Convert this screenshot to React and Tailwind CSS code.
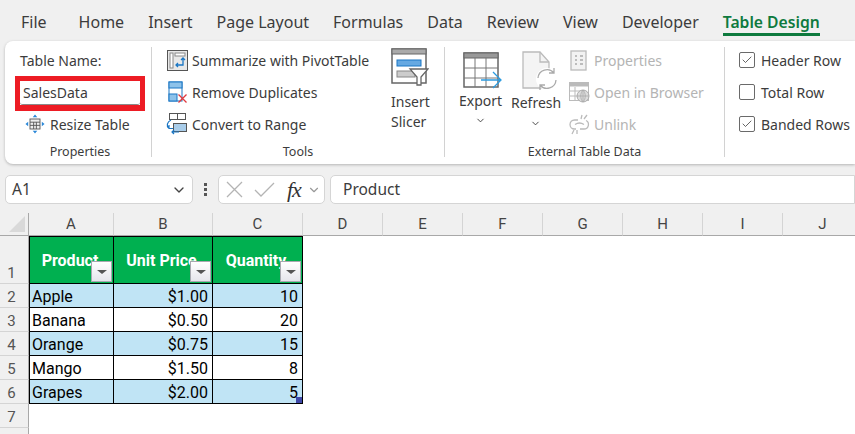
import React from 'react';
import { Check, ChevronDown } from 'lucide-react';

const UI_FONT = 'font-["Noto_Sans",sans-serif]';
const CELL_FONT = 'font-["Roboto",sans-serif]';

const TABS = ['Home', 'Insert', 'Page Layout', 'Formulas', 'Data', 'Review', 'View', 'Developer'];
const COLUMNS = ['A', 'B', 'C', 'D', 'E', 'F', 'G', 'H', 'I', 'J'];
const ROWS = [
  { name: 'Apple', price: '$1.00', qty: '10' },
  { name: 'Banana', price: '$0.50', qty: '20' },
  { name: 'Orange', price: '$0.75', qty: '15' },
  { name: 'Mango', price: '$1.50', qty: '8' },
  { name: 'Grapes', price: '$2.00', qty: '5' },
];

const ResizeIcon = () => (
  <svg width="20" height="20" viewBox="0 0 22 22" fill="none">
    <rect x="5.500" y="5.500" width="11" height="11" fill="#eee" stroke="#555" />
    <path d="M5.500 9h11M9.500 9v7.500M12.500 9v7.500M5.500 12.500h11" stroke="#555" />
    <path d="M11 0.500l2.500 3h-5zM11 21.500l2.500-3h-5zM0.500 11l3-2.500v5zM21.500 11l-3-2.500v5z" fill="#2b88d8" />
  </svg>
);

const PivotIcon = () => (
  <svg width="21" height="21" viewBox="0 0 21 21" fill="none">
    <rect x="0.500" y="0.500" width="20" height="20" fill="#e8e8e8" stroke="#555" />
    <rect x="3" y="3" width="3" height="15" fill="#fff" stroke="#888" />
    <rect x="8" y="3" width="10" height="3" fill="#fff" stroke="#888" />
    <path d="M16 8.500v6.500H9.500M14 10l2-2 2 2M11 13l-2 2 2 2" stroke="#1a76c4" strokeWidth="1.300" />
  </svg>
);

const DuplicatesIcon = () => (
  <svg width="22" height="22" viewBox="0 0 22 22" fill="none">
    <rect x="3" y="1" width="13" height="19" fill="#fff" stroke="#1a76c4" />
    <rect x="3" y="1" width="13" height="6" fill="#8dc2ea" stroke="#1a76c4" />
    <rect x="3" y="13" width="8" height="7" fill="#8dc2ea" stroke="#1a76c4" />
    <path d="M12.500 13.500l8 8M20.500 13.500l-8 8" stroke="#e0393e" strokeWidth="1.300" />
  </svg>
);

const ConvertIcon = () => (
  <svg width="22" height="22" viewBox="0 0 22 22" fill="none">
    <rect x="3.500" y="0.500" width="8" height="6" fill="#fff" stroke="#555" />
    <rect x="11.500" y="0.500" width="8" height="6" fill="#fff" stroke="#555" />
    <rect x="7.500" y="10.500" width="13" height="8" fill="#a9cdea" stroke="#555" />
    <path d="M5 7C1 9 0 13 3 15.500M3 15.500V12M3 15.500H7M6 19h7M8 17l-2 2 2 2" stroke="#1a76c4" strokeWidth="1.200" />
  </svg>
);

const SlicerIcon = () => (
  <svg width="38" height="38" viewBox="0 0 38 38" fill="none">
    <rect x="1" y="1" width="34" height="34" fill="#fff" stroke="#666" strokeWidth="1.500" />
    <rect x="1" y="1" width="34" height="5" fill="#aaa" stroke="#666" />
    <rect x="6" y="12" width="24" height="6" fill="#66a9e2" stroke="#1a76c4" />
    <rect x="6" y="23" width="18" height="6" fill="#ccc" stroke="#888" />
    <path d="M19 21h18l-7 8v8h-4v-8z" fill="#fff" stroke="#666" strokeWidth="1.300" />
  </svg>
);

const ExportIcon = () => (
  <svg width="39" height="37" viewBox="0 0 39 37" fill="none">
    <rect x="1" y="1" width="34" height="34" fill="#fff" stroke="#666" strokeWidth="1.500" />
    <rect x="1" y="1" width="34" height="5" fill="#999" stroke="#666" />
    <path d="M1 16h34M1 26h34M12 6v29M23 6v29" stroke="#777" />
    <path d="M18 31h19M30 23l8 8-8 8" stroke="#2b9be0" strokeWidth="1.300" transform="translate(0 -3)" />
  </svg>
);

const RefreshIcon = () => (
  <svg width="36" height="39" viewBox="0 0 36 39" fill="none">
    <path d="M1 1h17l9 10v26H1z" fill="#f4f4f4" stroke="#bbb" strokeWidth="1.300" />
    <path d="M18 1v10h9" stroke="#bbb" strokeWidth="1.300" />
    <circle cx="25" cy="28" r="11" fill="#fff" />
    <path d="M16 27a9 9 0 0 1 16-5M34 29a9 9 0 0 1-16 5M32 17v5h-5M18 39v-5h5" stroke="#aaa" strokeWidth="1.300" />
  </svg>
);

const PropertiesIcon = () => (
  <svg width="18" height="21" viewBox="0 0 18 21" fill="none">
    <rect x="1" y="1" width="15" height="19" fill="#f2f2f2" stroke="#bbb" strokeWidth="1.300" />
    <path d="M5 6h2M10 6h3M5 10h2M10 10h3M5 14h2M10 14h3" stroke="#aaa" strokeWidth="1.500" />
  </svg>
);

const BrowserIcon = () => (
  <svg width="21" height="21" viewBox="0 0 21 21" fill="none">
    <rect x="0.500" y="0.500" width="19" height="18" fill="#fff" stroke="#bbb" />
    <rect x="0.500" y="0.500" width="19" height="4" fill="#bbb" />
    <path d="M0.500 9h12M0.500 14h8M6 5v14" stroke="#bbb" />
    <circle cx="14" cy="14" r="6" fill="#ddd" stroke="#aaa" />
    <path d="M8 14h12M14 8v12M14 8c-3 3-3 9 0 12M14 8c3 3 3 9 0 12" stroke="#aaa" strokeWidth="0.800" />
  </svg>
);

const UnlinkIcon = () => (
  <svg width="21" height="21" viewBox="0 0 21 21" fill="none">
    <path d="M9 6H5.500a4.500 4.500 0 0 0 0 9H7M11 15h4a4.500 4.500 0 0 0 2-8.500" stroke="#bbb" strokeWidth="1.300" />
    <path d="M6 10.500c3-2 6-2 9 0M13 1l-1 4M18 1l-3 4M3 20l2-4M8 20v-4" stroke="#bbb" strokeWidth="1.300" />
  </svg>
);

const RibbonRow = ({ icon, label, muted }) => (
  <div className={`h-8 flex items-center gap-[4px] whitespace-nowrap ${muted ? 'text-[#b4b4b4]' : 'text-[#3c3c3c]'}`}>
    <div className="w-[22px] flex justify-center">{icon}</div>
    <span>{label}</span>
  </div>
);

const OptionRow = ({ label, checked }) => (
  <div className="h-8 flex items-center gap-[6px] whitespace-nowrap text-[#3c3c3c]">
    <div className="w-4 h-4 rounded-[2px] border border-[#6a6a6a] bg-white flex items-center justify-center">
      {checked && <Check size={12} strokeWidth={1.500} color="#333" />}
    </div>
    <span>{label}</span>
  </div>
);

const Group = ({ width, label, labelClass = '', className = '', children }) => (
  <div className={`flex flex-col shrink-0 h-[110px] border-r border-[#d2d2d2] ${width}`}>
    <div className={`flex-1 ${className}`}>{children}</div>
    <div className={`text-center text-[12.500px] text-[#3c3c3c] leading-[18px] h-[14px] ${labelClass}`}>{label}</div>
  </div>
);

const Ribbon = () => (
  <div className="ml-[5px] h-[123px] bg-white rounded-l-[8px] shadow-[0_1px_3px_rgba(0,0,0,0.25)] pt-[6px] flex text-[14px] overflow-hidden">
    <Group width="w-[147px]" label="Properties" labelClass="pl-[4px]" className="pl-[15px] -mt-[3px]">
      <div className="h-8 flex items-center text-[#3c3c3c]">Table Name:</div>
      <div className="-ml-[5px] -mb-[3px] w-[130px] h-[35px] border-[5px] border-b-[6px] border-[#ed1c24] bg-white">
        <div className="h-full rounded-b-[3px] border-b border-[#8a8a8a] pl-[3px] leading-[23px] text-[#3c3c3c]">SalesData</div>
      </div>
      <div className="h-8 flex items-center gap-[5px] pl-[5px] text-[#3c3c3c]">
        <ResizeIcon />
        <span>Resize Table</span>
      </div>
    </Group>
    <Group width="w-[293px]" label="Tools" className="flex -mt-[3px]">
      <div className="pl-[14px] w-[235px]">
        <RibbonRow icon={<PivotIcon />} label="Summarize with PivotTable" />
        <RibbonRow icon={<DuplicatesIcon />} label="Remove Duplicates" />
        <RibbonRow icon={<ConvertIcon />} label="Convert to Range" />
      </div>
      <div className="pl-[4px] pt-[4px] leading-5 text-[#3c3c3c]">
        <SlicerIcon />
        <div className="mt-[6px]">Insert</div>
        <div>Slicer</div>
      </div>
    </Group>
    <Group width="w-[280px]" label="External Table Data" className="flex -mt-[3px]">
      <div className="w-[63px] pl-[18px] pt-[8px] text-[#3c3c3c]">
        <ExportIcon />
        <div className="mt-[2px] -ml-[4px] leading-5">Export</div>
        <ChevronDown size={11} className="ml-[12px] mt-[4px]" />
      </div>
      <div className="w-[62px] pl-[14px] pt-[7px] text-[#3c3c3c]">
        <RefreshIcon />
        <div className="-ml-[11px] leading-5 mt-[3px]">Refresh</div>
        <ChevronDown size={11} className="ml-[8px] mt-[5px]" />
      </div>
      <div className="-ml-[2px]">
        <RibbonRow muted icon={<PropertiesIcon />} label="Properties" />
        <RibbonRow muted icon={<BrowserIcon />} label="Open in Browser" />
        <RibbonRow muted icon={<UnlinkIcon />} label="Unlink" />
      </div>
    </Group>
    <div className="pl-[14px] -mt-[3px]">
      <OptionRow checked label="Header Row" />
      <OptionRow label="Total Row" />
      <OptionRow checked label="Banded Rows" />
    </div>
  </div>
);

const FormulaBar = () => (
  <div className="mt-[11px] h-[29px] flex items-center text-[15.500px] text-[#3c3c3c]">
    <div className="ml-[5px] w-[188px] h-full bg-white border border-[#d5d5d5] rounded-[5px] flex items-center justify-between pl-[6px] pr-[5px]">
      <span>A1</span>
      <ChevronDown size={16} color="#444" />
    </div>
    <div className="w-[25px] flex flex-col items-center gap-[2px]">
      <span className="w-[3px] h-[3px] bg-[#555]" />
      <span className="w-[3px] h-[3px] bg-[#555]" />
      <span className="w-[3px] h-[3px] bg-[#555]" />
    </div>
    <div className="w-[107px] h-full bg-white border border-[#d5d5d5] rounded-[5px] flex items-center pl-[7px]">
      <svg width="17" height="17" viewBox="0 0 17 17" fill="none">
        <path d="M1 1l15 15M16 1L1 16" stroke="#b4b4b4" strokeWidth="1.300" />
      </svg>
      <svg className="ml-[11px]" width="21" height="15" viewBox="0 0 21 15" fill="none">
        <path d="M1 8l6 6L20 1" stroke="#b4b4b4" strokeWidth="1.300" />
      </svg>
      <span className='ml-[12px] font-["Liberation_Serif",serif] italic text-[22px] text-[#333] leading-none tracking-[-1px]'>fx</span>
      <ChevronDown size={14} className="ml-[6px] text-[#999]" />
    </div>
    <div className="ml-[5px] flex-1 h-full bg-white border border-[#d5d5d5] rounded-l-[5px] flex items-center pl-[12px]">Product</div>
  </div>
);

const FilterButton = () => (
  <div className="absolute right-[1px] bottom-[1px] w-[21px] h-[21px] border border-[#a8a8b0] bg-gradient-to-b from-white to-[#e6e6ec] flex items-center justify-center">
    <div className="w-0 h-0 border-x-[5px] border-x-transparent border-t-[4px] border-t-[#555]" />
  </div>
);

const HeaderCell = ({ label, className = '' }) => (
  <div className={`relative h-[48px] bg-[#00b050] border-y border-r border-black text-white font-bold text-[16px] text-center pt-[14px] pr-[3px] leading-5 ${className}`}>
    {label}
    <FilterButton />
  </div>
);

const RowHead = ({ n, className = 'h-6' }) => (
  <div className={`bg-[#f0f0f0] border-r border-b border-[#d4d4d4] border-r-[#a8a8a8] flex items-end justify-center pr-[5px] text-[#555] text-[15px] leading-5 ${className}`}>{n}</div>
);

const Sheet = () => (
  <div className={`mt-[9px] grid grid-cols-[29px_85px_99px_90px_repeat(7,80px)] text-[16px] text-black ${CELL_FONT}`}>
    <div className="h-[23px] bg-[#f0f0f0] border-r border-b border-[#a8a8a8] relative">
      <div className="absolute right-[3px] bottom-[3px] w-0 h-0 border-l-[16px] border-l-transparent border-b-[16px] border-b-[#d9d9d9]" />
    </div>
    {COLUMNS.map((c) => (
      <div key={c} className="h-[23px] bg-[#f0f0f0] border-r border-[#d4d4d4] border-b border-b-[#a8a8a8] text-center text-[15px] leading-[22px] text-[#444]">{c}</div>
    ))}

    <RowHead n="1" className="h-[48px]" />
    <HeaderCell label="Product" className="border-l" />
    <HeaderCell label="Unit Price" />
    <HeaderCell label="Quantity" />
    <div className="col-span-7 bg-white" />

    {ROWS.map((row, i) => {
      const band = i % 2 === 0 ? 'bg-[#c0e4f5]' : 'bg-white';
      return (
        <React.Fragment key={row.name}>
          <RowHead n={i + 2} />
          <div className={`h-6 ${band} border-l border-r border-b border-black pl-[2px] leading-[25px]`}>{row.name}</div>
          <div className={`h-6 ${band} border-r border-b border-black text-right pr-[3px] leading-[25px]`}>
            <span className="mr-[1px]">{row.price}</span>
          </div>
          <div className={`relative h-6 ${band} border-r border-b border-black text-right pr-[4px] leading-[25px]`}>
            {row.qty}
            {i === ROWS.length - 1 && <div className="absolute right-0 bottom-0 w-[6px] h-[6px] bg-[#3f48a8]" />}
          </div>
          <div className="col-span-7 bg-white" />
        </React.Fragment>
      );
    })}

    <RowHead n="7" />
    <div className="col-span-10 bg-white" />
    <RowHead n="" />
    <div className="col-span-10 bg-white" />
  </div>
);

export default function App() {
  return (
    <div className={`w-[855px] h-[434px] overflow-hidden bg-[#f0f0f0] ${UI_FONT}`}>
      <div className="h-[41px] flex text-[16px] text-[#3c3c3c] pl-[21px] gap-[24px] pt-[10px] leading-[24px] whitespace-nowrap">
        <span className="mr-[8px]">File</span>
        {TABS.map((t) => (
          <span key={t}>{t}</span>
        ))}
        <span className="h-[26px] border-b-[3px] border-[#0e7a3e] font-semibold text-[#0e7a3e] text-[15.700px]">Table Design</span>
      </div>
      <Ribbon />
      <FormulaBar />
      <Sheet />
    </div>
  );
}
